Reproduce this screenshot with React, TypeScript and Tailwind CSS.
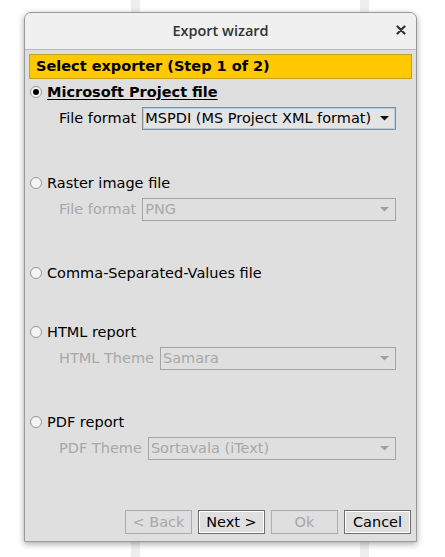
import React from 'react';

const font = { fontFamily: '"DejaVu Sans", Verdana, sans-serif' };

const Radio = ({ checked }: { checked?: boolean }) => (
  <span className="w-[12px] h-[12px] rounded-full border border-[#959595] bg-[#f4f4f4] flex items-center justify-center shrink-0">
    {checked && <span className="w-[6px] h-[6px] rounded-full bg-black" />}
  </span>
);

const Arrow = ({ disabled }: { disabled?: boolean }) => (
  <svg width="9" height="5" viewBox="0 0 9 5" className="shrink-0">
    <polygon points="0,0 9,0 4.5,4.5" fill={disabled ? '#a0a0a0' : '#111'} />
  </svg>
);

const Combo = ({ value, disabled }: { value: string; disabled?: boolean }) =>
  disabled ? (
    <div className="flex-1 h-[23px] border border-[#a4a4a4] flex items-center pl-[2px] pr-[6px] text-[#a8a8a8]">
      <span className="flex-1">{value}</span>
      <Arrow disabled />
    </div>
  ) : (
    <div className="flex-1 h-[23px] border border-[#8c8c8c] flex">
      <div className="flex-1 border border-[#b4cde6] bg-[#e4e4e4] flex items-center pl-[1px] pr-[5px] text-black">
        <span className="flex-1">{value}</span>
        <Arrow />
      </div>
    </div>
  );

const Section = ({
  label,
  checked,
  field,
  value,
  tall,
}: {
  label: string;
  checked?: boolean;
  field?: string;
  value?: string;
  tall?: boolean;
}) => (
  <div className={tall ? 'h-[91px]' : field ? 'h-[90px]' : 'h-[59px]'}>
    <div className="h-[20px] flex items-center gap-[5px] pl-[1px]">
      <Radio checked={checked} />
      <span className={checked ? 'font-bold underline underline-offset-2' : ''}>{label}</span>
    </div>
    {field && (
      <div className="mt-[5px] flex items-center pl-[30px] pr-[16px] gap-[6px]">
        <span className={checked ? 'text-black' : 'text-[#a8a8a8]'}>{field}</span>
        <Combo value={value!} disabled={!checked} />
      </div>
    )}
  </div>
);

const Button = ({ label, disabled }: { label: string; disabled?: boolean }) =>
  disabled ? (
    <div className="w-[67px] h-[24px] border border-[#adadad] flex items-center justify-center text-[#a8a8a8]">
      {label}
    </div>
  ) : (
    <div className="w-[67px] h-[24px] border border-[#6e6e6e] flex">
      <div className="flex-1 border border-white flex items-center justify-center text-black">{label}</div>
    </div>
  );

export default function App() {
  return (
    <div
      className="w-[445px] h-[557px] bg-white relative overflow-hidden text-[14.5px] leading-none"
      style={font}
    >
      {/* desktop behind the dialog */}
      <div className="absolute top-0 bottom-0 left-[131px] w-[9px] bg-[#eeeeee]" />
      <div className="absolute top-0 bottom-0 left-[360px] w-[9px] bg-[#eeeeee]" />

      <div className="absolute left-[24px] top-[12px] w-[393px] h-[530px] rounded-t-[7px] border border-[#9a9a9a] bg-[#dfdfdf] shadow-[0_2px_6px_rgba(0,0,0,0.35)] flex flex-col overflow-hidden">
        <div className="h-[37px] bg-[#f0f0f0] border-b border-[#b8b8b8] flex items-center justify-center relative shrink-0">
          <span className="text-[14.5px] text-[#2e3436] font-semibold" style={{ fontFamily: '"Open Sans", sans-serif' }}>
            Export wizard
          </span>
          <span className="absolute right-[10px] top-[12px]">
            <svg width="10" height="10" viewBox="0 0 10 10">
              <path d="M1.5 1.5 L8.5 8.5 M8.5 1.5 L1.5 8.5" stroke="#2e3436" strokeWidth="2.2" strokeLinecap="round" />
            </svg>
          </span>
        </div>

        <div className="flex-1 flex flex-col px-[4px] pt-[4px] pb-[7px]">
          <div className="h-[25px] bg-[#ffc800] border border-[#c7a020] flex items-center pl-[6px] font-bold text-[14.5px] text-black shrink-0">
            Select exporter (Step 1 of 2)
          </div>

          <div className="mt-[3px] flex flex-col text-black">
            <Section label="Microsoft Project file" checked field="File format" value="MSPDI (MS Project XML format)" tall />
            <Section label="Raster image file" field="File format" value="PNG" />
            <Section label="Comma-Separated-Values file" />
            <Section label="HTML report" field="HTML Theme" value="Samara" />
            <Section label="PDF report" field="PDF Theme" value="Sortavala (iText)" />
          </div>

          <div className="mt-auto flex justify-end gap-[6px] pr-[1px]">
            <Button label="< Back" disabled />
            <Button label="Next >" />
            <Button label="Ok" disabled />
            <Button label="Cancel" />
          </div>
        </div>
      </div>
    </div>
  );
}
